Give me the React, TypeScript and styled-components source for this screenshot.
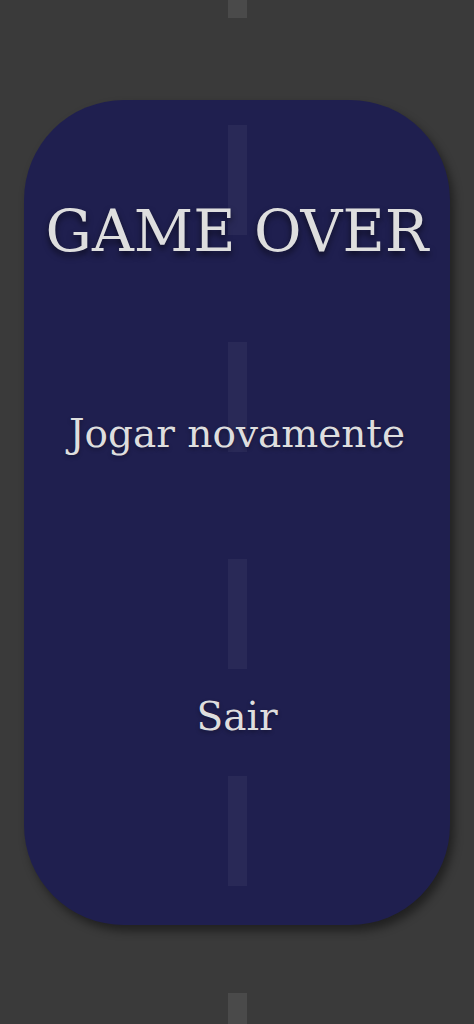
import React from 'react';
import styled, { createGlobalStyle } from 'styled-components';

const GlobalStyle = createGlobalStyle`
    html, body {
        margin: 0;
        padding: 0;
        background: #3a3a3a;
    }
    * {
        box-sizing: border-box;
    }
`;

// lane stripe, repeated down the middle of the road
const stripe = (color: string) => `
    background-image: repeating-linear-gradient(
        to bottom,
        ${color} 0px,
        ${color} 110px,
        transparent 110px,
        transparent 217px
    );
    background-size: 19px 217px;
    background-position: 228px -92px;
    background-repeat: repeat-y;
    background-attachment: fixed;
`;

const Road = styled.main`
    position: relative;
    width: 100%;
    height: 1024px;
    overflow: hidden;
    background-color: #3a3a3a;
    ${stripe('#4a4a4a')}
`;

const Modal = styled.section`
    position: absolute;
    left: 24px;
    top: 100px;
    width: 426px;
    height: 825px;
    border-radius: 100px;
    background-color: #1f1f4f;
    ${stripe('rgba(255, 255, 255, 0.045)')}
    box-shadow: 4px 6px 10px rgba(0, 0, 0, 0.45);
    display: flex;
    flex-direction: column;
    align-items: center;
    padding-top: 96px;
    font-family: 'DejaVu Serif', 'Liberation Serif', serif;
    color: #dedede;
`;

const Title = styled.h1`
    margin: 0;
    font-size: 58px;
    font-weight: normal;
    line-height: 70px;
    text-shadow: 0 4px 6px rgba(0, 0, 0, 0.55);
    white-space: nowrap;
`;

interface ButtonProps {
    $gap: number;
}

const MenuButton = styled.button<ButtonProps>`
    margin-top: ${props => props.$gap}px;
    padding: 0;
    border: none;
    background: none;
    font-family: inherit;
    font-size: 39px;
    line-height: 50px;
    color: #dedede;
    text-shadow: 0 2px 4px rgba(0, 0, 0, 0.3);
    white-space: nowrap;
    cursor: pointer;
`;

export default function App(): JSX.Element {
    return (
        <>
            <GlobalStyle />
            <Road>
                <Modal>
                    <Title>GAME OVER</Title>
                    <MenuButton $gap={143}>Jogar novamente</MenuButton>
                    <MenuButton $gap={233}>Sair</MenuButton>
                </Modal>
            </Road>
        </>
    );
}
